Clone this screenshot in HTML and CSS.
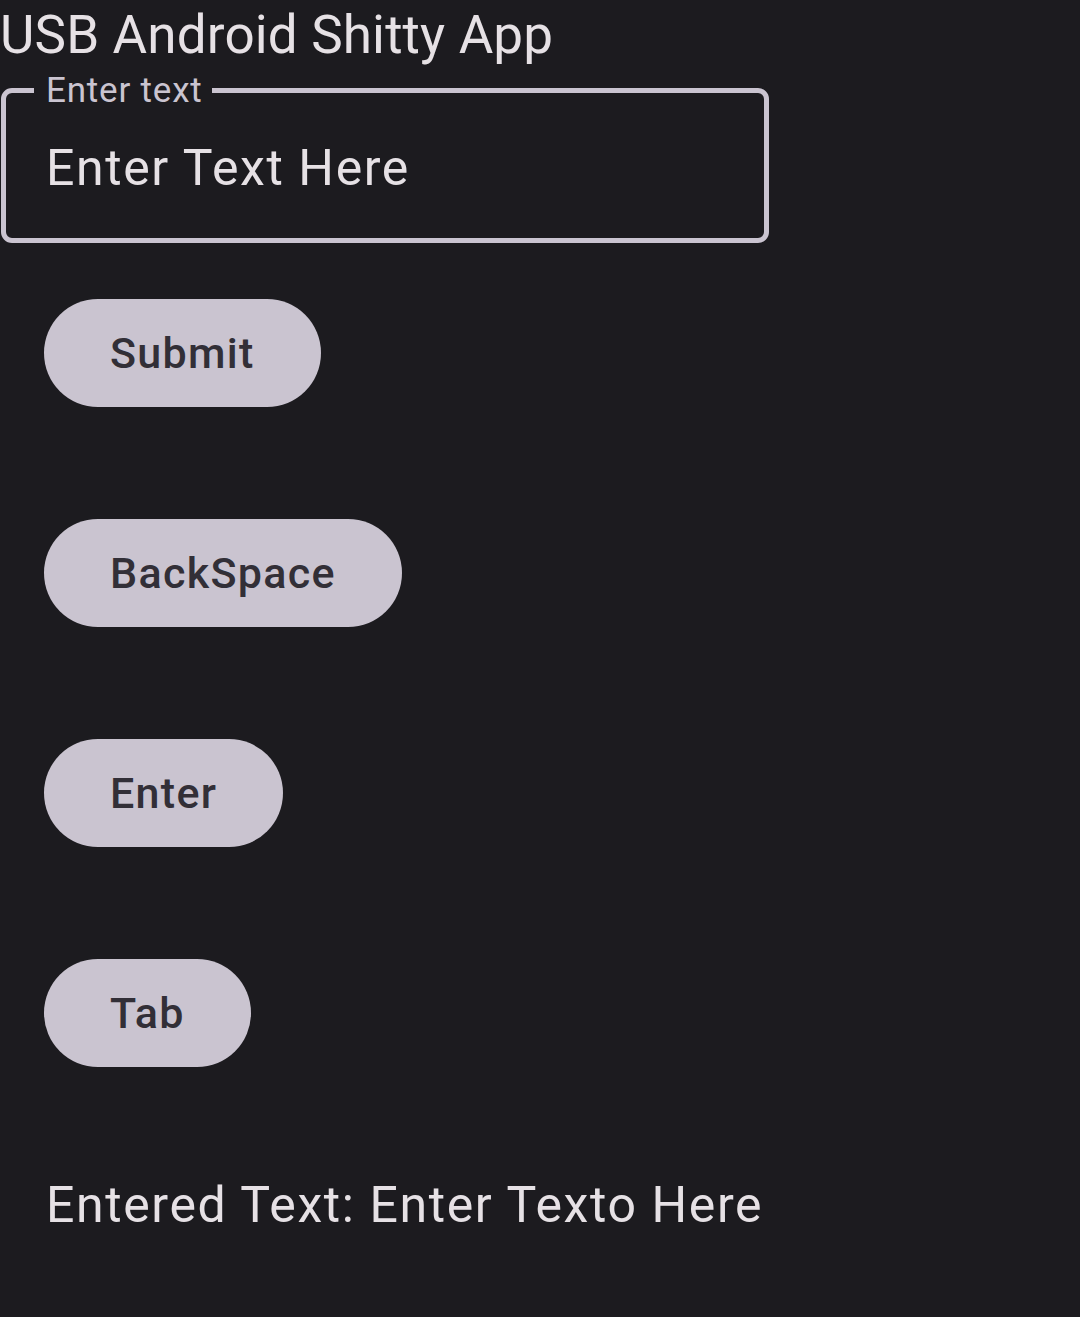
FILE: index.html
```html
<!DOCTYPE html>
<html>
<head>
<meta charset="utf-8">
<link rel="stylesheet" href="styles.css">
</head>
<body>
<div class="app">
  <h1 class="title">USB Android Shitty App</h1>
  <div class="field">
    <span class="field-label">Enter text</span>
    <div class="field-value">Enter Text Here</div>
  </div>
  <div class="buttons">
    <button class="btn">Submit</button>
    <button class="btn">BackSpace</button>
    <button class="btn">Enter</button>
    <button class="btn">Tab</button>
  </div>
  <p class="result">Entered Text: Enter Texto Here</p>
</div>
</body>
</html>
```
FILE: styles.css
```css
html, body {
  margin: 0;
  padding: 0;
  background: #1c1b1f;
}
body {
  width: 1080px;
  height: 1317px;
  overflow: hidden;
  font-family: Roboto, "Noto Sans", sans-serif;
  color: #e6e1e5;
}
.app {
  display: flex;
  flex-direction: column;
  align-items: flex-start;
}
.title {
  margin: 0;
  padding-top: 3px;
  font-size: 53px;
  font-weight: 400;
  line-height: 64px;
  color: #e6e1e5;
  letter-spacing: 0.15px;
}
.field {
  margin: 21px 0 0 1px;
  width: 768px;
  height: 155px;
  box-sizing: border-box;
  border: 5px solid #cac4d0;
  border-radius: 11px;
  padding: 45px 0 0 40px;
  position: relative;
}
.field-label {
  position: absolute;
  top: -20px;
  left: 28px;
  padding: 0 9px 0 12px;
  background: #1c1b1f;
  font-size: 35px;
  line-height: 35px;
  color: #cac4d0;
  letter-spacing: 0.8px;
}
.field-value {
  font-size: 50px;
  line-height: 60px;
  color: #e6e1e5;
  letter-spacing: 1.6px;
}
.buttons {
  display: flex;
  flex-direction: column;
  align-items: flex-start;
  gap: 112px;
  margin: 56px 0 0 44px;
}
.btn {
  height: 108px;
  border: none;
  border-radius: 54px;
  background: #cac4d0;
  color: #322f37;
  font-family: Roboto, "Noto Sans", sans-serif;
  font-size: 43px;
  font-weight: 500;
  padding: 0 66px;
  letter-spacing: 1.3px;
}
.result {
  margin: 108px 0 0 46px;
  font-size: 50px;
  line-height: 60px;
  color: #e6e1e5;
  letter-spacing: 1.6px;
}
```
